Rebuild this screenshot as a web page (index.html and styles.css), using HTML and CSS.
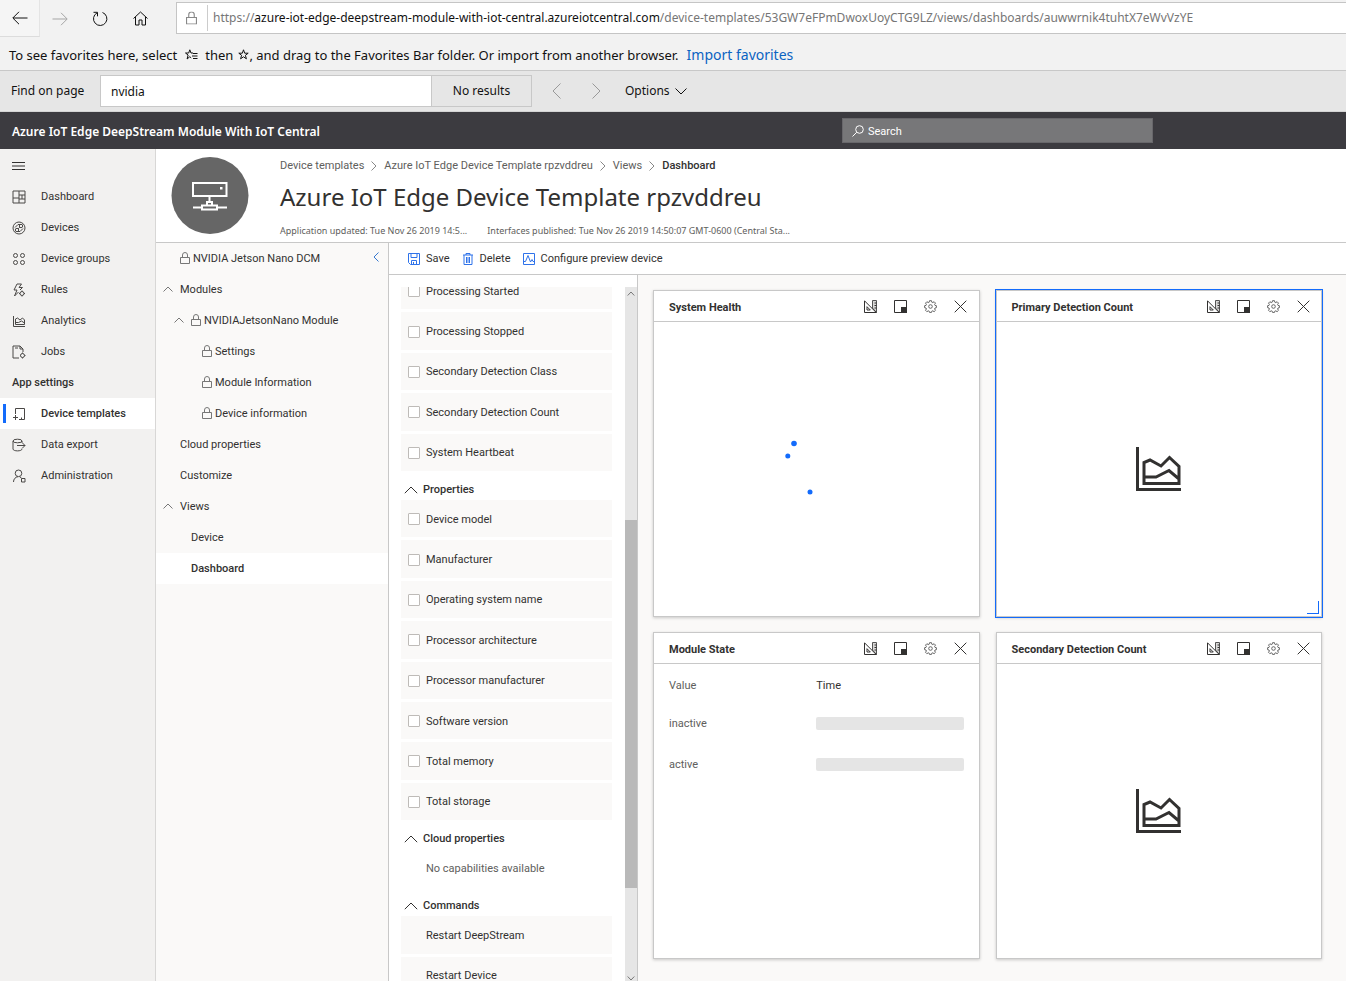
FILE: index.html
```html
<!DOCTYPE html>
<html lang="en">
<head>
<meta charset="utf-8">
<title>Azure IoT Edge DeepStream Module With IoT Central</title>
<link rel="stylesheet" href="styles.css">
</head>
<body>
<svg class="defs" aria-hidden="true">
  <defs>
    <symbol id="lock" viewBox="0 0 10 12"><path d="M.5 5.5h9v6h-9zM2.500 5.500V3a2.500 2.500 0 0 1 5 0v2.500"/></symbol>
    <symbol id="up" viewBox="0 0 10 6"><path d="M.5 5.500 5 1l4.500 4.500"/></symbol>
    <symbol id="right" viewBox="0 0 6 10"><path d="M.5.5 5 5 .5 9.500"/></symbol>
    <symbol id="ruler" viewBox="0 0 13 13"><path class="tint" d="M8.500 8V.5h4v12z"/><path d="M.5 12.500V.8l11.700 11.700zM3 10V6.700L6.300 10zM12.500 3h-2M12.500 5.500h-2M12.500 8h-2"/></symbol>
    <symbol id="size" viewBox="0 0 13 13"><path d="M.5.5h12v12H.5z"/><path class="solid" d="M7 7h6v6H7z"/></symbol>
    <symbol id="gear" viewBox="0 0 13 13"><path d="M5.500.7h2l.3 1.500 1 .4 1.300-.9 1.400 1.400-.9 1.300.4 1 1.400.3v2l-1.400.3-.4 1 .9 1.300-1.400 1.400-1.300-.9-1 .4-.3 1.200h-2l-.3-1.200-1-.4-1.300.9-1.400-1.400.9-1.300-.4-1L.6 7.700v-2L2 5.400l.4-1-.9-1.300 1.400-1.400 1.300.9 1-.4z"/><circle cx="6.500" cy="6.500" r="1.800"/></symbol>
    <symbol id="close" viewBox="0 0 13 13"><path d="m.7.7 11.600 11.600M12.300.7.7 12.300"/></symbol>
    <symbol id="area" viewBox="0 0 45 44"><path d="M1.500 0v42.500H45M8 36.500v-21l6-2.500L25 19l8.500-8.500L43 19.500v17zM8 30h12l13-6.500 10 8.500"/></symbol>
  </defs>
</svg>

<div class="browser-bar">
  <button class="nav-btn nav-back" aria-label="Back"><svg width="16" height="14" viewBox="0 0 16 14"><path d="M15.500 7H1M7 .8.8 7 7 13.200"/></svg></button>
  <button class="nav-btn nav-off" aria-label="Forward"><svg width="16" height="14" viewBox="0 0 16 14"><path d="M.5 7H15M9 .8 15.200 7 9 13.200"/></svg></button>
  <button class="nav-btn" aria-label="Refresh"><svg width="16" height="16" viewBox="0 0 16 16"><path d="M10.500 1.500A6.700 6.700 0 1 1 5 1.900M1.500 1.300h4v4"/></svg></button>
  <button class="nav-btn" aria-label="Home"><svg width="15" height="15" viewBox="0 0 15 15"><path d="M.5 7.500l7-6.500 7 6.500M2.500 6v8h3.500V9h3v5h3.500V6"/></svg></button>
  <div class="address">
    <svg class="address-lock" width="11" height="14" viewBox="0 0 10 12"><use href="#lock"/></svg>
    <span class="url">https://<b>azure-iot-edge-deepstream-module-with-iot-central.azureiotcentral.com</b>/device-templates/53GW7eFPmDwoxUoyCTG9LZ/views/dashboards/auwwrnik4tuhtX7eWvVzYE</span>
  </div>
</div>

<div class="favorites">
  <span>To see favorites here, select</span>
  <svg class="fav-list" width="13" height="12" viewBox="0 0 13 12"><path d="M8 4H6L4.800.8 3.700 4H.5l2.600 2-1 4 2.700-2.300 1.400 1.200M8 4.500h4.500M7 7h5.500M8 9.500h4.500"/></svg>
  <span>then</span>
  <svg class="fav-star" width="11" height="11" viewBox="0 0 11 11"><path d="m5.500.8 1.200 3.400h3.500L7.400 6.300l1 3.500-2.900-2-2.900 2 1-3.500L.8 4.200h3.500z"/></svg>
  <span>, and drag to the Favorites Bar folder. Or import from another browser.</span>
  <a class="import" href="#">Import favorites</a>
</div>

<div class="find">
  <label class="find-label" for="find">Find on page</label>
  <input class="find-input" id="find" type="text" value="nvidia">
  <span class="find-result">No results</span>
  <button class="find-step" aria-label="Previous"><svg width="9" height="16" viewBox="0 0 9 16"><path d="M8.500.5 1 8l7.500 7.500"/></svg></button>
  <button class="find-step" aria-label="Next"><svg width="9" height="16" viewBox="0 0 9 16"><path d="M.5.5 8 8 .5 15.500"/></svg></button>
  <button class="find-options">Options <svg width="12" height="7" viewBox="0 0 12 7"><path d="M.5.5 6 6 11.500.5"/></svg></button>
</div>

<header class="app-bar">
  <strong class="app-name">Azure IoT Edge DeepStream Module With IoT Central</strong>
  <label class="search">
    <svg width="12" height="12" viewBox="0 0 12 12"><circle cx="7.500" cy="4.500" r="3.800"/><path d="M4.700 7.300.5 11.500"/></svg>
    <input type="text" placeholder="Search" aria-label="Search">
  </label>
</header>

<div class="app">
  <nav class="side">
    <button class="menu" aria-label="Menu"><svg width="13" height="8" viewBox="0 0 13 8"><path d="M0 .5h13M0 4h13M0 7.500h13"/></svg></button>
    <a class="side-item" href="#"><svg width="14" height="14" viewBox="0 0 14 14"><path d="M1 1h12v12H1zM7 1v12M1 8h6M7 5h6M10 5v4M7 9h6"/></svg>Dashboard</a>
    <a class="side-item" href="#"><svg width="14" height="14" viewBox="0 0 14 14"><circle cx="7" cy="7" r="6"/><circle cx="9" cy="5" r="1.700"/><circle cx="5" cy="9" r="1.700"/><path d="M3 6.500 6 3.500h3M11 7.500l-3 3H5M6.200 7.800l1.600-1.600"/></svg>Devices</a>
    <a class="side-item" href="#"><svg width="14" height="14" viewBox="0 0 14 14"><circle cx="3.500" cy="3.500" r="2"/><circle cx="10.500" cy="3.500" r="2"/><circle cx="3.500" cy="10.500" r="2"/><circle cx="10.500" cy="10.500" r="2"/></svg>Device groups</a>
    <a class="side-item" href="#"><svg width="14" height="14" viewBox="0 0 14 14"><path d="M9.500 1H5L2 7h3l-2.500 6 4-4M9.500 1 7 4.500h3.500L8 7"/><circle cx="10" cy="10.500" r="2"/><path d="M10 7.500v1M10 12.500v1M7 10.500h1M12 10.500h1"/></svg>Rules</a>
    <a class="side-item" href="#"><svg width="14" height="14" viewBox="0 0 14 14"><path d="M1.500 2v10.500H13M3.500 10.500V5l2-1 2.500 2 2.500-2L12.500 6v4.500zM3.500 8.500h3l3-1.500 3 2"/></svg>Analytics</a>
    <a class="side-item" href="#"><svg width="14" height="14" viewBox="0 0 14 14"><path d="M7 13H1V1h7l3 3v3M8 1v3h3M3 3h3"/><circle cx="10.500" cy="10.500" r="2"/><path d="M10.500 7.500v1M10.500 12.500v1M8 10.500h.5M12.500 10.500h1"/></svg>Jobs</a>
    <h2 class="side-head">App settings</h2>
    <a class="side-item side-on" href="#"><svg width="14" height="14" viewBox="0 0 14 14"><path d="M3.500 7V1.500h9v11H7M3.500 8v5M1 10.500h5M9.500 12.500v-2"/></svg>Device templates</a>
    <a class="side-item" href="#"><svg width="14" height="14" viewBox="0 0 14 14"><path d="M10 5V3M1 3v8c0 2.500 9 2.500 9 0v-.5M5 7.500h8M10.500 5l2.500 2.500-2.500 2.500"/><ellipse cx="5.500" cy="3" rx="4.500" ry="1.800"/></svg>Data export</a>
    <a class="side-item" href="#"><svg width="14" height="14" viewBox="0 0 14 14"><circle cx="6.500" cy="4.300" r="3.300"/><path d="M1.500 13c0-3 2-5 4.500-5.300M7.500 7.700l2 1.300M9.500 9.500h3.500V13H9.500z"/></svg>Administration</a>
  </nav>

  <main class="main">
    <section class="page-head">
      <svg class="avatar" width="78" height="78" viewBox="0 0 78 78"><circle cx="39" cy="38.500" r="38.500"/><path d="M22 26h33.500v13H22zM22 50.500h9M46 50.500h10M31 48.500h15v4H31zM36 48.500V45h5v3.500M38.500 39v6"/><path class="dot" d="M49 30h2.500v2.500H49z"/></svg>
      <div class="page-text">
        <nav class="crumbs" aria-label="Breadcrumb">
          <a href="#">Device templates</a><svg width="6" height="10"><use href="#right"/></svg>
          <a href="#">Azure IoT Edge Device Template rpzvddreu</a><svg width="6" height="10"><use href="#right"/></svg>
          <a href="#">Views</a><svg width="6" height="10"><use href="#right"/></svg>
          <span class="crumb-on">Dashboard</span>
        </nav>
        <h1 class="title">Azure IoT Edge Device Template rpzvddreu</h1>
        <div class="meta"><span>Application updated: Tue Nov 26 2019 14:5...</span><span>Interfaces published: Tue Nov 26 2019 14:50:07 GMT-0600 (Central Sta...</span></div>
      </div>
    </section>

    <div class="work">
      <nav class="tree" aria-label="Template">
        <a class="node l1 node-root" href="#"><svg class="lock" width="10" height="12"><use href="#lock"/></svg>NVIDIA Jetson Nano DCM</a>
        <button class="collapse" aria-label="Collapse"><svg width="6" height="10" viewBox="0 0 6 10"><path d="M5.500.5 1 5l4.500 4.500"/></svg></button>
        <a class="node l1 open" href="#"><svg width="10" height="6"><use href="#up"/></svg>Modules</a>
        <a class="node l2 open" href="#"><svg width="10" height="6"><use href="#up"/></svg><svg class="lock" width="10" height="12"><use href="#lock"/></svg>NVIDIAJetsonNano Module</a>
        <a class="node l3" href="#"><svg class="lock" width="10" height="12"><use href="#lock"/></svg>Settings</a>
        <a class="node l3" href="#"><svg class="lock" width="10" height="12"><use href="#lock"/></svg>Module Information</a>
        <a class="node l3" href="#"><svg class="lock" width="10" height="12"><use href="#lock"/></svg>Device information</a>
        <a class="node l1" href="#">Cloud properties</a>
        <a class="node l1" href="#">Customize</a>
        <a class="node l1 open" href="#"><svg width="10" height="6"><use href="#up"/></svg>Views</a>
        <a class="node l2" href="#">Device</a>
        <a class="node l2 node-on" href="#">Dashboard</a>
      </nav>

      <div class="editor">
        <div class="commands">
          <button class="cmd"><svg width="12" height="12" viewBox="0 0 12 12"><path d="M.5.500h11v11h-9l-2-2zM3 .5v4h6v-4M3.500 11.500v-4h5v4M5.500 9v2"/></svg>Save</button>
          <button class="cmd"><svg width="12" height="12" viewBox="0 0 12 12"><path d="M1 2h10M4 2V.5h4V2M2 2v9.500h8V2M4.500 4v6M6 4v6M7.500 4v6"/></svg>Delete</button>
          <button class="cmd"><svg width="12" height="12" viewBox="0 0 12 12"><path d="M.5.5h11v11H.5zM.5 8.500h2l2.500-6L7.500 9 9 6.500l1 2h1.500"/></svg>Configure preview device</button>
        </div>
        <div class="design">
          <aside class="caps">
            <div class="caps-list">
              <div class="rows rows-first">
                <label class="cap"><input type="checkbox">Processing Started</label>
                <label class="cap"><input type="checkbox">Processing Stopped</label>
                <label class="cap"><input type="checkbox">Secondary Detection Class</label>
                <label class="cap"><input type="checkbox">Secondary Detection Count</label>
                <label class="cap"><input type="checkbox">System Heartbeat</label>
              </div>
              <button class="group"><svg width="14" height="8" viewBox="0 0 14 8"><path d="M.8 7.200 7 1l6.200 6.200"/></svg>Properties</button>
              <div class="rows rows-eight">
                <label class="cap"><input type="checkbox">Device model</label>
                <label class="cap"><input type="checkbox">Manufacturer</label>
                <label class="cap"><input type="checkbox">Operating system name</label>
                <label class="cap"><input type="checkbox">Processor architecture</label>
                <label class="cap"><input type="checkbox">Processor manufacturer</label>
                <label class="cap"><input type="checkbox">Software version</label>
                <label class="cap"><input type="checkbox">Total memory</label>
                <label class="cap"><input type="checkbox">Total storage</label>
              </div>
              <button class="group"><svg width="14" height="8" viewBox="0 0 14 8"><path d="M.8 7.200 7 1l6.200 6.200"/></svg>Cloud properties</button>
              <p class="none">No capabilities available</p>
              <button class="group"><svg width="14" height="8" viewBox="0 0 14 8"><path d="M.8 7.200 7 1l6.200 6.200"/></svg>Commands</button>
              <div class="rows">
                <div class="cap cap-plain">Restart DeepStream</div>
                <div class="cap cap-plain">Restart Device</div>
              </div>
            </div>
            <div class="scroll" aria-hidden="true">
              <svg width="8" height="5" viewBox="0 0 8 5"><path d="M.7 4.500 4 1l3.300 3.500"/></svg>
              <div class="track"><div class="thumb"></div></div>
              <svg width="8" height="5" viewBox="0 0 8 5"><path d="M.7.5 4 4 7.300.5"/></svg>
            </div>
          </aside>

          <section class="canvas">
            <article class="card">
              <header class="card-head"><h3>System Health</h3>
                <button aria-label="Edit"><svg width="13" height="13"><use href="#ruler"/></svg></button><button aria-label="Size"><svg width="13" height="13"><use href="#size"/></svg></button><button aria-label="Settings"><svg class="gear" width="13" height="13"><use href="#gear"/></svg></button><button aria-label="Remove"><svg width="13" height="13"><use href="#close"/></svg></button>
              </header>
              <div class="card-fill"><svg class="spinner" width="60" height="60" viewBox="0 0 60 60"><circle cx="8" cy="4.500" r="2.800"/><circle cx="1.800" cy="17" r="2.500"/><circle cx="24" cy="53" r="2.500"/></svg></div>
            </article>
            <article class="card card-on">
              <header class="card-head"><h3>Primary Detection Count</h3>
                <button aria-label="Edit"><svg width="13" height="13"><use href="#ruler"/></svg></button><button aria-label="Size"><svg width="13" height="13"><use href="#size"/></svg></button><button aria-label="Settings"><svg class="gear" width="13" height="13"><use href="#gear"/></svg></button><button aria-label="Remove"><svg width="13" height="13"><use href="#close"/></svg></button>
              </header>
              <div class="card-fill"><svg class="chart" width="45" height="44"><use href="#area"/></svg></div>
              <span class="grip"></span>
            </article>
            <article class="card">
              <header class="card-head"><h3>Module State</h3>
                <button aria-label="Edit"><svg width="13" height="13"><use href="#ruler"/></svg></button><button aria-label="Size"><svg width="13" height="13"><use href="#size"/></svg></button><button aria-label="Settings"><svg class="gear" width="13" height="13"><use href="#gear"/></svg></button><button aria-label="Remove"><svg width="13" height="13"><use href="#close"/></svg></button>
              </header>
              <table class="state">
                <thead><tr><th>Value</th><th class="time">Time</th></tr></thead>
                <tbody>
                  <tr><td>inactive</td><td><div class="pending"></div></td></tr>
                  <tr><td>active</td><td><div class="pending"></div></td></tr>
                </tbody>
              </table>
            </article>
            <article class="card">
              <header class="card-head"><h3>Secondary Detection Count</h3>
                <button aria-label="Edit"><svg width="13" height="13"><use href="#ruler"/></svg></button><button aria-label="Size"><svg width="13" height="13"><use href="#size"/></svg></button><button aria-label="Settings"><svg class="gear" width="13" height="13"><use href="#gear"/></svg></button><button aria-label="Remove"><svg width="13" height="13"><use href="#close"/></svg></button>
              </header>
              <div class="card-fill"><svg class="chart" width="45" height="44"><use href="#area"/></svg></div>
            </article>
          </section>
        </div>
      </div>
    </div>
  </main>
</div>
</body>
</html>
```
FILE: styles.css
```css
:root {
  --ink: #323130;
  --soft: #605e5c;
  --line: #c8c8c8;
  --pale: #faf9f8;
  --blue: #136bfb;
}

* { box-sizing: border-box; }

body {
  margin: 0;
  height: 100vh;
  display: flex;
  flex-direction: column;
  overflow: hidden;
  font: 11px/17px Roboto, "Noto Sans", sans-serif;
  color: var(--ink);
  background: #fff;
}

button, input { font: inherit; color: inherit; }
button { border: 0; padding: 0; background: none; }
a { color: inherit; text-decoration: none; }
h1, h2, h3, p { margin: 0; }
svg { flex: none; fill: none; stroke: currentColor; }
.defs { position: absolute; width: 0; height: 0; }

/* Browser chrome */
.browser-bar, .favorites, .find, .app-name, .title, .meta { font-family: "Noto Sans", "Open Sans", sans-serif; line-height: 16px; }
.browser-bar {
  display: flex;
  height: 37px;
  flex: none;
  background: #f2f2f2;
  color: #111;
}
.nav-btn { width: 40px; display: grid; place-items: center; }
.nav-back { border-right: 1px solid #e4e4e4; border-bottom: 1px solid #dcdcdc; background: #f5f5f5; }
.nav-off { color: #a5a5a5; }
.address {
  flex: 1;
  min-width: 0;
  display: flex;
  align-items: center;
  height: 32px;
  margin: 2px 0 0 16px;
  border: 1px solid #c5c5c5;
  border-right: 0;
  background: #fff;
}
.address-lock { margin: 0 10px 0 9px; color: #888; }
.url {
  padding-left: 5px;
  border-left: 1px solid #ccc;
  font-size: 12px;
  line-height: 26px;
  color: #767676;
  white-space: nowrap;
}
.url b { font-weight: 400; color: #111; }

.favorites {
  display: flex;
  align-items: center;
  flex: none;
  height: 34px;
  padding: 2px 0 0 9px;
  border-bottom: 1px solid var(--line);
  background: #f2f2f2;
  font-size: 13px;
  color: #111;
  white-space: nowrap;
}
.fav-list { margin: 0 7px 0 8px; }
.fav-star { margin-left: 5px; }
.import { margin-left: 8px; color: #0a63c2; font-size: 14px; }

.find {
  display: flex;
  align-items: center;
  flex: none;
  height: 41px;
  border-bottom: 1px solid #d4d4d4;
  background: #e6e6e6;
  font-size: 12px;
  color: #111;
}
.find-label { width: 100px; padding-left: 11px; }
.find-input { width: 332px; height: 32px; padding: 0 10px; border: 1px solid var(--line); border-radius: 0; outline: 0; background: #fff; }
.find-result { width: 100px; height: 32px; line-height: 30px; text-align: center; border: 1px solid var(--line); border-left: 0; }
.find-step { width: 40px; height: 32px; color: #999; display: grid; place-items: center; }
.find-step + .find-options { margin-left: 9px; }
.find-result + .find-step { margin-left: 4px; }
.find-options { display: flex; align-items: center; gap: 5px; }

/* Application bar */
.app-bar {
  display: flex;
  align-items: center;
  justify-content: space-between;
  flex: none;
  height: 37px;
  padding: 0 193px 0 12px;
  background: #3c3b40;
  color: #fff;
}
.app-name { padding-top: 2px; font-size: 12px; font-weight: 600; }
.search { display: flex; align-items: center; gap: 4px; width: 311px; height: 25px; padding-left: 9px; border: 1px solid #68676b; background: #777779; }
.search input { flex: 1; min-width: 0; border: 0; outline: 0; padding: 2px 0 0; background: none; }
.search input::placeholder { color: #fff; opacity: 1; }

.app { display: flex; flex: 1; min-height: 0; }

/* Side navigation */
.side { width: 156px; flex: none; border-right: 1px solid #d8d7d6; background: #f2f1f0; }
.menu { display: flex; align-items: center; height: 32px; padding: 1px 12px 0; }
.side-item { display: flex; align-items: center; gap: 15px; height: 31px; padding-left: 12px; }
.side-item svg { color: #4a4846; }
.side-head { height: 31px; padding-left: 12px; font-size: 11px; line-height: 32px; font-weight: 500; }
.side-on { position: relative; background: #fff; font-weight: 500; }
.side-on::before { content: ""; position: absolute; left: 3px; top: 6px; width: 3px; height: 19px; background: var(--blue); }

.main { flex: 1; min-width: 0; display: flex; flex-direction: column; }

/* Page heading */
.page-head { display: flex; flex: none; gap: 31px; height: 94px; padding: 8px 0 0 15px; border-bottom: 1px solid var(--line); white-space: nowrap; }
.avatar circle { fill: #666; stroke: none; }
.avatar path { stroke: #fff; stroke-width: 2; }
.avatar .dot { fill: #fff; stroke: none; }
.crumbs { display: flex; align-items: center; gap: 7px; height: 17px; color: var(--soft); }
.crumbs svg { color: #888; }
.crumb-on { color: var(--ink); font-weight: 500; }
.title { font-size: 24px; line-height: 34px; margin-top: 6px; font-weight: 400; }
.meta { display: flex; gap: 20px; margin-top: 9px; font-size: 9px; color: var(--soft); }

.work { display: flex; flex: 1; min-height: 0; }

/* Template tree */
.tree { position: relative; width: 233px; flex: none; border-right: 1px solid var(--line); background: var(--pale); }
.node { display: flex; align-items: center; height: 31px; padding-bottom: 1px; }
.node svg { margin-right: 7px; color: #777; }
.node .lock { margin-right: 3px; }
.l1 { padding-left: 24px; }
.l2 { padding-left: 35px; }
.l3 { padding-left: 46px; }
.l1.open { padding-left: 7px; }
.l2.open { padding-left: 18px; }
.node-on { background: #fff; font-weight: 500; }
.collapse { position: absolute; top: 0; right: 0; width: 25px; height: 31px; color: #3779d0; }

/* Editor */
.editor { flex: 1; min-width: 0; display: flex; flex-direction: column; }
.commands { display: flex; align-items: center; gap: 12px; flex: none; height: 32px; padding-left: 19px; border-bottom: 1px solid var(--line); }
.cmd { display: flex; align-items: center; gap: 6px; }
.cmd svg { color: #2f73ea; }
.design { display: flex; flex: 1; min-height: 0; }

/* Capabilities */
.caps { display: flex; width: 249px; flex: none; padding: 12px 0 0 12px; border-right: 1px solid var(--line); }
.caps-list { flex: 1; overflow: hidden; padding-right: 13px; }
.rows { display: grid; grid-auto-rows: 1fr; gap: 3px; height: 78px; }
.rows-first { height: 199px; margin-top: -15px; }
.rows-eight { height: 320px; }
.cap { display: flex; align-items: center; gap: 6px; padding: 1px 0 0 7px; background: var(--pale); }
.cap-plain { padding-left: 25px; }
.cap input { appearance: none; width: 12px; height: 12px; margin: 0; border: 1px solid #bebbb8; border-radius: 1px; background: #fff; }
.group { display: flex; align-items: center; gap: 5px; width: 100%; height: 29px; padding: 8px 0 0 3px; font-weight: 500; }
.none { height: 38px; padding-left: 25px; line-height: 40px; color: var(--soft); }
.scroll { display: flex; flex-direction: column; align-items: center; width: 12px; padding-top: 4px; background: #e6e6e6; color: #777; }
.track { flex: 1; width: 100%; padding-top: 224px; }
.thumb { height: 368px; background: #b9b9b9; }

/* Dashboard tiles */
.canvas {
  flex: 1;
  min-width: 0;
  display: grid;
  grid-template-columns: 1fr 1fr;
  grid-auto-rows: 327px;
  gap: 15px 16px;
  padding: 15px 24px 0 15px;
  background: var(--pale);
}
.card { position: relative; display: flex; flex-direction: column; border: 1px solid var(--line); background: #fff; box-shadow: 0 1px 3px rgba(0, 0, 0, .2); }
.card-on { outline: 1px solid var(--blue); }
.card-head { display: flex; align-items: center; height: 31px; padding: 0 3px 0 15px; border-bottom: 1px solid var(--line); }
.card-head h3 { flex: 1; padding-top: 2px; font-size: 11px; font-weight: 700; }
.card-head button { width: 30px; height: 30px; display: grid; place-items: center; }
.solid { fill: currentColor; stroke: none; }
.tint { fill: #d9d8d7; stroke: #555; }
.gear { color: #666; }
.card-fill { flex: 1; display: grid; place-items: center; }
.chart { stroke-width: 3; }
.spinner { fill: var(--blue); stroke: none; overflow: visible; }
.grip { position: absolute; right: 2px; bottom: 2px; width: 12px; height: 13px; border: solid var(--blue); border-width: 0 1px 1px 0; }
.state { width: 100%; padding: 4px 15px 0; border-spacing: 0; table-layout: fixed; color: var(--soft); }
.state th { height: 35px; padding: 0; font-weight: 400; text-align: left; }
.state .time { color: var(--ink); }
.state td { height: 41px; padding: 0; }
.pending { height: 13px; border-radius: 2px; background: #e5e5e5; }
```
